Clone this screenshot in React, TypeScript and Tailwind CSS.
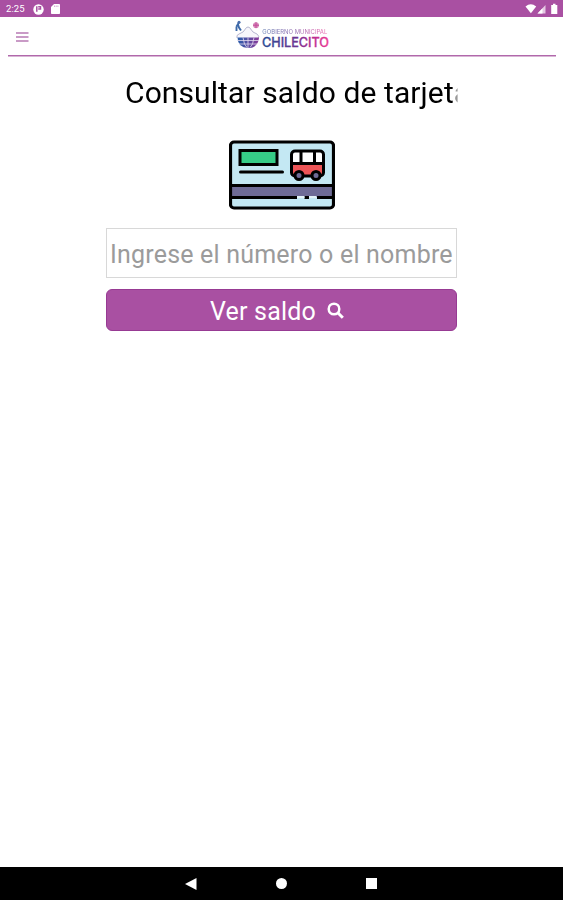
import React from "react";

function StatusBar() {
  return (
    <div className="flex h-[17px] shrink-0 items-center bg-[#a950a2] pt-px pl-[6px] pr-[4px] text-white">
      <span className="w-[27px] text-[9.5px] leading-none tracking-[0.1px]">2:25</span>
      <svg className="h-[11px] w-[11px]" viewBox="0 0 11 11">
        <circle cx="5.5" cy="5.5" r="5.2" fill="#fff" />
        <path d="M3.800 2.300v5.400M5.200 2.800h2.300v2.200H5.200" stroke="#a950a2" strokeWidth="1.500" fill="none" />
      </svg>
      <svg className="ml-[7px] h-[10px] w-[9px]" viewBox="0 0 9 10">
        <path d="M3 0h5.2q.8 0 .8.8v8.4q0 .8-.8.8H.8Q0 10 0 9.200V3z" fill="#fff" />
        <path d="M3.500 1.500v1.500M5.200 1.500v1.500M6.900 1.500v1.500" stroke="#c98bc5" strokeWidth=".7" />
      </svg>
      <svg className="ml-auto h-[12px] w-[34px]" viewBox="0 0 34 12">
        <path d="M0.500 3.500Q5.800-.8 11.200 3.500L5.900 10.200z" fill="#fff" />
        <path d="M12.500 10.500 20.500 2v8.500z" fill="#e5c8e3" />
        <path d="M12.500 10.500 17.500 5.200v5.300z" fill="#fff" />
        <path d="M26.200 2h1.800V.8h2.500V2h1.800v9h-6.100z" fill="#fff" />
      </svg>
    </div>
  );
}

function Logo() {
  return (
    <svg className="h-[32px] w-[98px] overflow-visible" viewBox="0 0 98 32" fontFamily="Inter, 'Liberation Sans', sans-serif">
      <defs>
        <linearGradient id="name" gradientUnits="userSpaceOnUse" x1="28" x2="95" y1="0" y2="0">
          <stop offset="0" stopColor="#294b93" />
          <stop offset=".5" stopColor="#6b3593" />
          <stop offset=".76" stopColor="#b62b91" />
          <stop offset="1" stopColor="#ef3c94" />
        </linearGradient>
        <linearGradient id="globe" x1="0" x2="1" y1="0" y2="0">
          <stop offset="0" stopColor="#285eaa" />
          <stop offset="1" stopColor="#8a3b9a" />
        </linearGradient>
      </defs>
      <path d="M2.500 8.500V13M2.500 8.500l2.500-4M4 6.500l1 3 2 3" stroke="#3d69a9" strokeWidth="1.900" fill="none" />
      <circle cx="5" cy="4.300" r="1.500" fill="#4b6fac" />
      <circle cx="22" cy="7.200" r="2.900" fill="#d78abb" />
      <path d="M19 7.200h6M22 4.200v6" stroke="#c34c9a" strokeWidth="1" />
      <path d="M3 20q-1-3 2-4l4-2 3.500-4.500q1.500-1 3 0l3.500 4.500 4 2q3 2 1 5" stroke="#a5a4c4" strokeWidth=".8" fill="#f7f6fb" />
      <path d="M3.500 19.500H25Q24 30 14 30T3.500 19.500z" fill="url(#globe)" />
      <path d="M3 22.500h22M5 26h18M9 19.500q1 8 4 10M14 19.500v10.500M20 19.500q-1 8-4 10" stroke="#e5dcf0" strokeWidth=".8" fill="none" />
      <text x="28.300" y="15.500" fontSize="6" textLength="65" lengthAdjust="spacingAndGlyphs" fill="url(#name)" opacity=".7">GOBIERNO MUNICIPAL</text>
      <text x="28" y="28.700" fontSize="12.800" fontWeight="500" textLength="67" lengthAdjust="spacingAndGlyphs" fill="url(#name)" stroke="url(#name)" strokeWidth=".3">CHILECITO</text>
    </svg>
  );
}

function Header() {
  return (
    <header className="flex h-[40px] shrink-0 flex-col pr-[7px] pl-[8px]">
      <div className="grid h-[39px] grid-cols-[226px_98px_1fr] border-b border-[#b168ab]">
        <svg className="mt-[15px] ml-[8px] h-[10px] w-[13px]" viewBox="0 0 13 10">
          <path d="M0 1h12.500M0 5h12.500M0 9h12.500" stroke="#b879b4" strokeWidth="1.400" />
        </svg>
        <div className="mt-px"><Logo /></div>
      </div>
      <div className="h-px bg-[#d8b5d5]" />
    </header>
  );
}

function CardPicture() {
  return (
    <svg className="h-[70px] w-[106px] shrink-0" viewBox="0 0 106 70">
      <rect x="1.500" y="2" width="103" height="66" rx="3.500" fill="#c4e8f3" />
      <path d="M1.500 46h103v11h-103z" fill="#6e6b96" />
      <path d="M2 45.500h102M2 57.500h66M75.500 57.500h4.500M88 57.500h16" stroke="#000" strokeWidth="2.800" />
      <path d="M68 57h7.500M80 57h7.500" stroke="#e3f3f8" strokeWidth="1.800" />
      <rect x="1.500" y="2" width="103" height="66" rx="3.500" fill="none" stroke="#000" strokeWidth="3.200" />
      <rect x="11" y="10.500" width="37" height="14" fill="#36cc87" stroke="#000" strokeWidth="3" />
      <path d="M11.500 32h42" stroke="#000" strokeWidth="3" strokeLinecap="round" />
      <rect x="62.500" y="11" width="32" height="25" rx="3.500" fill="#ee5557" />
      <path d="M62.500 23V14q0-3 3-3h26q3 0 3 3V23z" fill="#fff" />
      <rect x="62.500" y="11" width="32" height="25" rx="3.500" fill="none" stroke="#000" strokeWidth="3" />
      <path d="M62.500 23.500h32M72 11V23M85.500 11V23" stroke="#000" strokeWidth="3" />
      <circle cx="70" cy="35.500" r="4" fill="#6e6b96" stroke="#000" strokeWidth="3" />
      <circle cx="87" cy="35.500" r="4" fill="#6e6b96" stroke="#000" strokeWidth="3" />
    </svg>
  );
}

function NavigationBar() {
  return (
    <nav className="mt-auto flex h-[33px] shrink-0 items-center bg-black pl-[185px] text-white">
      <svg className="h-[12px] w-[12px]" viewBox="0 0 12 12"><path d="M0 6 11.500 0v12z" fill="#fff" /></svg>
      <span className="ml-[79px] h-[11px] w-[11px] rounded-full bg-white" />
      <span className="ml-[79px] h-[11px] w-[11px] bg-white" />
    </nav>
  );
}

export default function App() {
  return (
    <div className="flex h-[900px] w-[563px] flex-col overflow-hidden bg-white font-[Roboto,'Liberation_Sans',sans-serif]">
      <StatusBar />
      <Header />
      <main className="flex flex-col pl-[106px]">
        <h1 className="mt-[16px] ml-[19px] h-[40px] w-[333px] overflow-hidden bg-linear-to-r from-black from-[98%] to-[#d8d8d8] to-[100%] bg-clip-text text-[30px] leading-[40px] font-normal tracking-[0.1px] whitespace-nowrap text-transparent">
          Consultar saldo de tarjeta
        </h1>
        <div className="mt-[27px] ml-[123px] flex"><CardPicture /></div>
        <input
          className="mt-[18px] h-[50px] w-[351px] border border-[#d8d8d8] px-[3px] pt-[2px] text-[25px] tracking-[0.2px] placeholder:text-[#9b9b9b]"
          placeholder="Ingrese el número o el nombre"
        />
        <button className="mt-[11px] flex h-[42px] w-[351px] items-center rounded-[6px] border border-[#973a93] bg-[#a950a2] pt-[3px] pl-[103px] text-[25px] leading-none tracking-[0.2px] text-white">
          <span>Ver saldo</span>
          <svg className="mb-[3px] ml-[11px] h-[17px] w-[17px]" viewBox="0 0 17 17" fill="none" stroke="#fff" strokeWidth="2.500">
            <circle cx="7" cy="7" r="5.300" />
            <path d="m10.800 10.800 5 5" strokeWidth="3" />
          </svg>
        </button>
      </main>
      <NavigationBar />
    </div>
  );
}
